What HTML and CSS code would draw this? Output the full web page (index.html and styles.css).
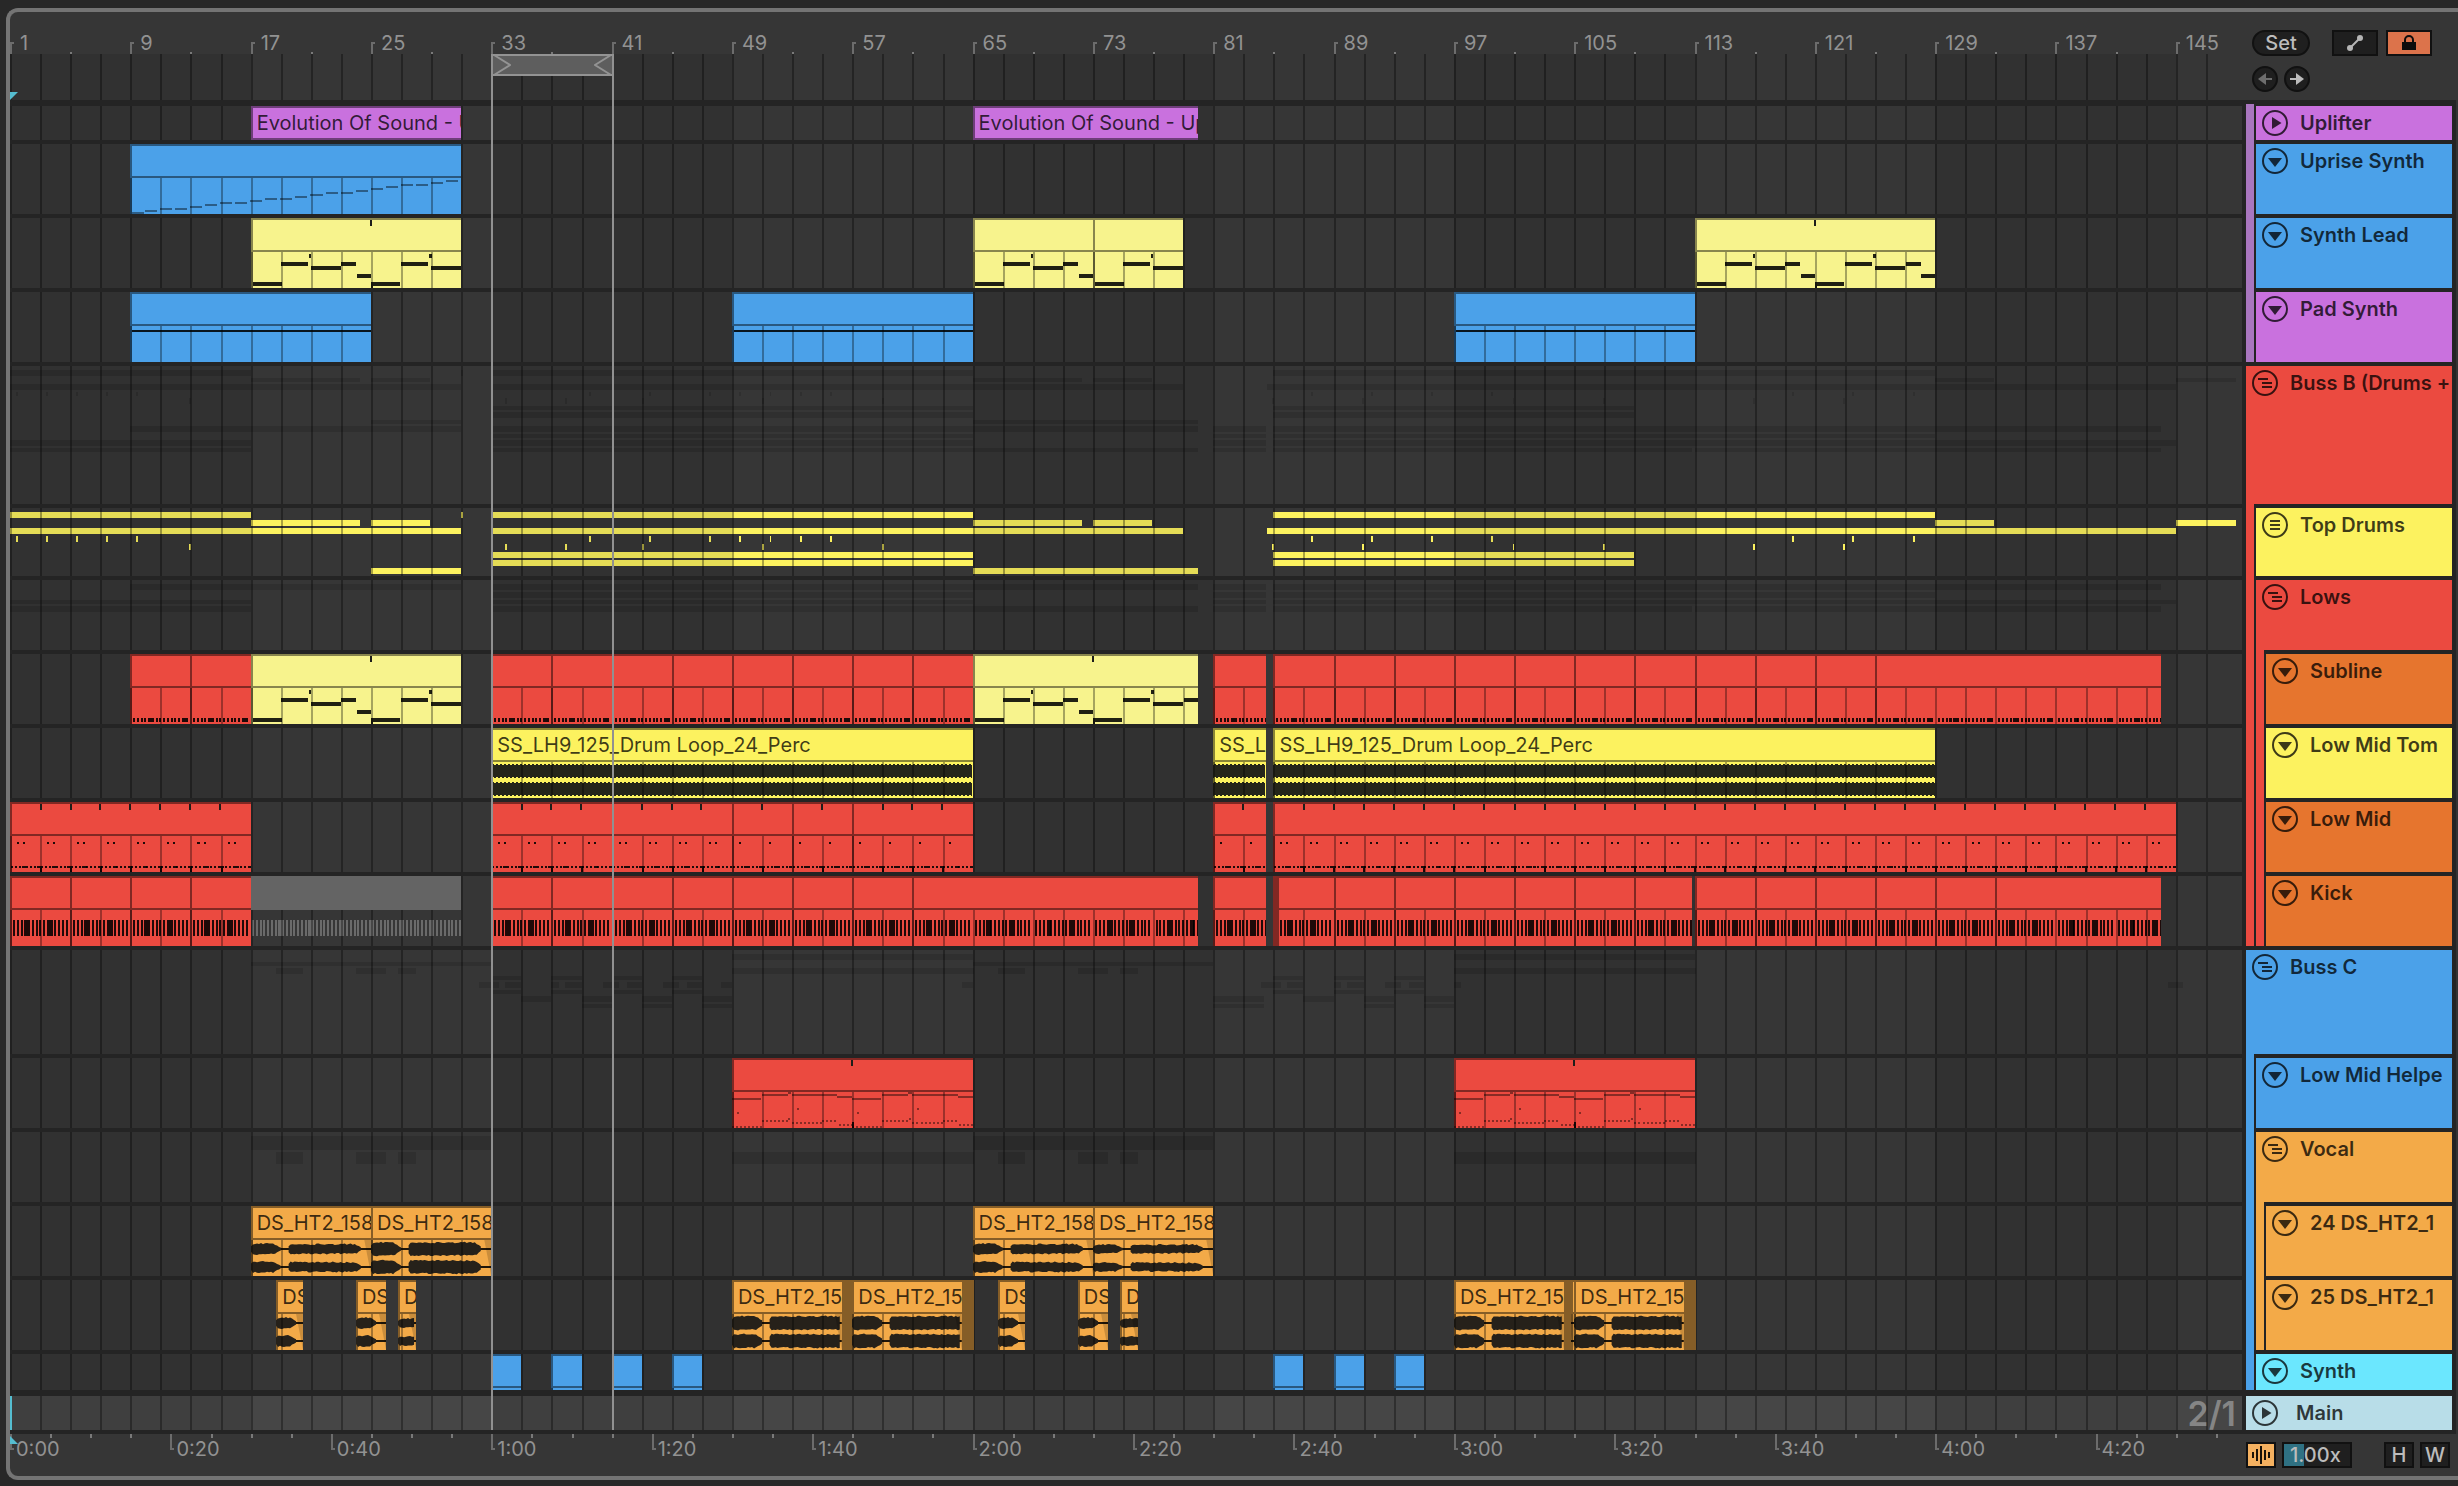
FILE: index.html
```html
<!DOCTYPE html>
<html lang="en">
<head>
    <meta charset="UTF-8">
    <meta name="viewport" content="width=device-width, initial-scale=1.0">
    <title>Arrangement</title>
    <link rel="stylesheet" href="styles.css">
</head>
<body>

    <!-- icons shared by the track headers -->
    <svg class="defs" aria-hidden="true">
        <symbol id="i-play" viewBox="0 0 26 26">
            <circle cx="13" cy="13" r="12" fill="none" stroke="currentColor" stroke-width="2"/>
            <path d="M10 7v12l9.500-6z" fill="currentColor"/>
        </symbol>
        <symbol id="i-fold" viewBox="0 0 26 26">
            <circle cx="13" cy="13" r="12" fill="none" stroke="currentColor" stroke-width="2"/>
            <path d="M6 10h14l-7 9z" fill="currentColor"/>
        </symbol>
        <symbol id="i-group" viewBox="0 0 26 26">
            <circle cx="13" cy="13" r="12" fill="none" stroke="currentColor" stroke-width="2"/>
            <path d="M6 9h10M10 13h10M10 17h10" stroke="currentColor" stroke-width="2"/>
        </symbol>
        <symbol id="i-list" viewBox="0 0 26 26">
            <circle cx="13" cy="13" r="12" fill="none" stroke="currentColor" stroke-width="2"/>
            <path d="M8 9h10M8 13h10M8 17h10" stroke="currentColor" stroke-width="2"/>
        </symbol>
    </svg>

    <div class="arranger">
        <div class="timeline">
            <div class="ruler" id="bars"></div>
            <div class="canvas" id="canvas">
                <div class="layer stripes" id="stripes"></div>
                <div class="layer lines" id="lines"></div>
                <div class="scrub"><span class="marker"></span></div>
                <div class="lanes" id="lanes"></div>
                <div class="layer loop" id="loop">
                    <div class="brace">
                        <svg width="18" height="22" viewBox="0 0 18 22"><path d="M1 1l16 10L1 21" fill="none" stroke="#939393" stroke-width="2"/></svg>
                        <svg width="18" height="22" viewBox="0 0 18 22"><path d="M17 1L1 11l16 10" fill="none" stroke="#939393" stroke-width="2"/></svg>
                    </div>
                </div>
            </div>
            <div class="ruler time" id="times"></div>
        </div>

        <div class="side">
            <div class="toolbar">
                <div class="tools">
                    <button class="btn pill">Set</button>
                    <button class="btn wide" aria-label="Automation">
                        <svg width="18" height="18" viewBox="0 0 18 18"><path d="M4 14L14 4" stroke="#b5b5b5" stroke-width="2"/><circle cx="4" cy="14" r="3" fill="#b5b5b5"/><circle cx="14" cy="4" r="3" fill="#b5b5b5"/></svg>
                    </button>
                    <button class="btn wide lock" aria-label="Lock envelopes">
                        <svg width="14" height="16" viewBox="0 0 14 16"><path d="M3 8V5a4 4 0 0 1 8 0v3" fill="none" stroke="#0d0d0d" stroke-width="2"/><path d="M0 7h14v8H0z" fill="#0d0d0d"/></svg>
                    </button>
                </div>
                <div class="tools">
                    <button class="btn round off" aria-label="Previous locator">
                        <svg width="14" height="12" viewBox="0 0 14 12"><path d="M0 6l8-6v12z" fill="currentColor"/><path d="M7 6h7" stroke="currentColor" stroke-width="2"/></svg>
                    </button>
                    <button class="btn round" aria-label="Next locator">
                        <svg width="14" height="12" viewBox="0 0 14 12"><path d="M14 6L6 0v12z" fill="currentColor"/><path d="M7 6H0" stroke="currentColor" stroke-width="2"/></svg>
                    </button>
                </div>
            </div>

            <div class="tracks">
                <div class="group mauve first">
                    <div class="children">
                        <div class="head purple short"><button class="fold" aria-label="Unfold"><svg><use href="#i-play"/></svg></button><span>Uplifter</span></div>
                        <div class="head blue"><button class="fold" aria-label="Fold"><svg><use href="#i-fold"/></svg></button><span>Uprise Synth</span></div>
                        <div class="head blue"><button class="fold" aria-label="Fold"><svg><use href="#i-fold"/></svg></button><span>Synth Lead</span></div>
                        <div class="head purple"><button class="fold" aria-label="Fold"><svg><use href="#i-fold"/></svg></button><span>Pad Synth</span></div>
                    </div>
                </div>
                <div class="group red">
                    <div class="head red buss-b"><button class="fold" aria-label="Fold"><svg><use href="#i-group"/></svg></button><span>Buss B (Drums +</span></div>
                    <div class="children">
                        <div class="head yellow drums"><button class="fold" aria-label="Fold"><svg><use href="#i-list"/></svg></button><span>Top Drums</span></div>
                        <div class="group red">
                            <div class="head red"><button class="fold" aria-label="Fold"><svg><use href="#i-group"/></svg></button><span>Lows</span></div>
                            <div class="children">
                                <div class="head rust"><button class="fold" aria-label="Fold"><svg><use href="#i-fold"/></svg></button><span>Subline</span></div>
                                <div class="head yellow"><button class="fold" aria-label="Fold"><svg><use href="#i-fold"/></svg></button><span>Low Mid Tom</span></div>
                                <div class="head rust"><button class="fold" aria-label="Fold"><svg><use href="#i-fold"/></svg></button><span>Low Mid</span></div>
                                <div class="head rust"><button class="fold" aria-label="Fold"><svg><use href="#i-fold"/></svg></button><span>Kick</span></div>
                            </div>
                        </div>
                    </div>
                </div>
                <div class="group blue">
                    <div class="head blue buss-c"><button class="fold" aria-label="Fold"><svg><use href="#i-group"/></svg></button><span>Buss C</span></div>
                    <div class="children">
                        <div class="head blue"><button class="fold" aria-label="Fold"><svg><use href="#i-fold"/></svg></button><span>Low Mid Helpe</span></div>
                        <div class="group amber">
                            <div class="head amber"><button class="fold" aria-label="Fold"><svg><use href="#i-group"/></svg></button><span>Vocal</span></div>
                            <div class="children">
                                <div class="head amber"><button class="fold" aria-label="Fold"><svg><use href="#i-fold"/></svg></button><span>24 DS_HT2_1</span></div>
                                <div class="head amber"><button class="fold" aria-label="Fold"><svg><use href="#i-fold"/></svg></button><span>25 DS_HT2_1</span></div>
                            </div>
                        </div>
                        <div class="head cyan synth"><button class="fold" aria-label="Fold"><svg><use href="#i-fold"/></svg></button><span>Synth</span></div>
                    </div>
                </div>
                <div class="head ice short main"><button class="fold" aria-label="Unfold"><svg><use href="#i-play"/></svg></button><span>Main</span></div>
            </div>

            <div class="footer">
                <button class="btn small wave" aria-label="Waveform zoom">
                    <svg width="18" height="18" viewBox="0 0 18 18"><path d="M1 6v6M5 3v12M9 0v18M13 4v10M17 6v6" stroke="#1a1208" stroke-width="2"/></svg>
                </button>
                <input class="zoom" type="text" value="1.00x" aria-label="Waveform zoom amount">
                <button class="btn small push">H</button>
                <button class="btn small">W</button>
            </div>
        </div>
    </div>

    <script src="script.js"></script>
</body>
</html>
```
FILE: styles.css
```css
* {
    box-sizing: border-box;
}
body {
    margin: 0;
    padding: 8px 0 6px 6px;
    background-color: #282828;
    font-family: Inter, "Liberation Sans", sans-serif;
    font-size: 20px;
    color: #929292;
}
.defs {
    display: none;
}
.arranger {
    display: grid;
    grid-template-columns: minmax(0, 1fr) 216px;
    border: 4px solid #747474;
    border-right: none;
    border-radius: 12px 0 0 12px;
    background-color: #363636;
}

/* colours */
.purple { --c: #c971de; }
.mauve { --c: #a976bf; }
.blue { --c: #4ba1e9; }
.red { --c: #eb4a40; }
.pale { --c: #f7f38d; }
.yellow { --c: #fcf25f; }
.rust { --c: #e6752e; }
.amber { --c: #f3aa48; }
.cyan { --c: #6be7fe; }
.ice { --c: #b8dde8; }

/* rulers */
.ruler {
    position: relative;
    height: 42px;
}
.ruler i {
    position: absolute;
    bottom: 0;
    width: 2px;
    height: 2px;
    background-color: #7a7a7a;
}
.ruler span {
    position: absolute;
    bottom: 0;
    height: 12px;
    padding-left: 8px;
    border-left: 2px solid #6c6c6c;
    line-height: 2px;
}
.ruler span::before {
    content: "";
    position: absolute;
    left: 0;
    top: 0;
    width: 2px;
    height: 2px;
    background-color: #6c6c6c;
}
.time i {
    bottom: auto;
    top: 0;
    height: 4px;
}
.time span {
    bottom: auto;
    top: 0;
    height: 16px;
    padding-left: 4px;
    line-height: 30px;
}
.time span::before {
    top: 14px;
}
.time .marker {
    top: 2px;
    bottom: auto;
    height: 8px;
    padding: 0;
    border: none;
    clip-path: polygon(0 0, 100% 100%, 0 100%);
}
.time .marker::before {
    display: none;
}

/* canvas: stripes < clip bodies < grid lines < clip titles < loop */
.canvas {
    position: relative;
}
.layer {
    position: absolute;
    top: 0;
    bottom: 0;
    left: 0;
    right: 0;
    overflow: hidden;
    pointer-events: none;
}
.stripes {
    z-index: 1;
}
.stripes div {
    position: absolute;
    top: 0;
    bottom: 0;
    background-color: rgba(0, 0, 0, 0.09);
}
.lines {
    z-index: 3;
}
.lines div {
    position: absolute;
    top: 0;
    bottom: 0;
    width: 2px;
    background-color: rgba(0, 0, 0, 0.33);
}
.scrub {
    position: relative;
    height: 52px;
}
.marker {
    position: absolute;
    left: 0;
    bottom: 6px;
    width: 8px;
    height: 8px;
    background-color: #55bdd0;
    clip-path: polygon(0 0, 100% 0, 0 100%);
    z-index: 4;
}
.scrub::after {
    content: "";
    position: absolute;
    left: 0;
    right: 0;
    bottom: 0;
    height: 6px;
    background-color: #242424;
    z-index: 4;
}
.lane {
    position: relative;
    height: 70px;
    margin-bottom: 4px;
}
.lane::after {
    content: "";
    position: absolute;
    left: 0;
    right: 0;
    top: 100%;
    height: 4px;
    background-color: #242424;
    z-index: 4;
}
.lane.short, .head.short { height: 34px; }
.lane.buss-b, .head.buss-b { height: 138px; }
.lane.drums, .head.drums { height: 68px; }
.lane.buss-c, .head.buss-c { height: 104px; }
.lane.synth, .head.synth { height: 36px; }
.lane.synth {
    margin-bottom: 6px;
}
.lane.synth::after {
    height: 6px;
}
.lane.main {
    display: flex;
    align-items: center;
    justify-content: flex-end;
    padding-right: 6px;
    background-color: #464646;
    font-size: 34px;
    font-weight: 600;
    color: #858585;
}
.lane.main::before {
    content: "";
    position: absolute;
    left: 0;
    top: 0;
    width: 2px;
    height: 100%;
    background-color: #55bdd0;
    z-index: 4;
}
.bar {
    position: absolute;
    background-color: #fcf25f;
}
.ghost .bar {
    background-color: rgba(0, 0, 0, 0.13);
}
.clip {
    position: absolute;
    top: 0;
    height: 100%;
    overflow: hidden;
}
.title {
    position: relative;
    z-index: 4;
    height: 34px;
    padding-left: 4px;
    border: 2px solid rgba(0, 0, 0, 0.45);
    border-right: none;
    background-color: var(--c);
    color: rgba(0, 0, 0, 0.77);
    line-height: 30px;
    white-space: nowrap;
    overflow: hidden;
}
.title i {
    position: absolute;
    top: 0;
    width: 2px;
    height: 6px;
    margin-left: -2px;
    background-color: #1e1e1a;
}
.body {
    position: relative;
    z-index: 2;
    height: 36px;
    background-color: var(--c);
    box-shadow: inset 2px 0 rgba(0, 0, 0, 0.45);
}
.body svg {
    display: block;
    width: 100%;
    height: 36px;
}
.muted .title {
    border: none;
    background-color: #646464;
}
.muted .body {
    background: none;
    box-shadow: none;
}
.shade {
    position: absolute;
    top: 0;
    height: 100%;
    z-index: 4;
    background-color: var(--c);
    box-shadow: inset 0 0 0 100px rgba(0, 0, 0, 0.45);
}
.loop {
    z-index: 5;
    border: 0 solid #919191;
    border-width: 0 2px;
}
.brace {
    display: flex;
    justify-content: space-between;
    height: 22px;
    border: 2px solid #939393;
    border-width: 2px 0;
    background-color: #5e5e5e;
}
.brace svg {
    margin-top: -2px;
}

/* right side */
.side {
    display: flex;
    flex-direction: column;
}
.toolbar {
    height: 88px;
    padding: 18px 0 0 10px;
}
.tools {
    display: flex;
    gap: 8px;
    margin-bottom: 10px;
}
.tools + .tools {
    gap: 6px;
}
.btn {
    display: flex;
    align-items: center;
    justify-content: center;
    height: 26px;
    padding: 0;
    border: 2px solid #111;
    background-color: #1f1f1f;
    color: #bcbcbc;
    font-family: inherit;
    font-size: 20px;
    font-weight: 500;
    cursor: pointer;
}
.pill {
    width: 58px;
    margin-right: 14px;
    border-radius: 13px;
}
.wide {
    width: 46px;
}
.lock {
    background-color: #dc734b;
}
.round {
    width: 26px;
    border-radius: 50%;
}
.round svg {
    flex: none;
}
.off {
    color: #6e6e6e;
}
.small {
    width: 30px;
}
.tracks {
    padding: 4px;
    border-right: 2px solid #333;
    background-color: #242424;
}
.group {
    margin-bottom: 4px;
    background-color: var(--c);
}
.children {
    margin-left: 8px;
    padding: 4px 0 0 2px;
    background-color: #242424;
}
.first > .children {
    padding-top: 2px;
}
.head {
    display: flex;
    align-items: flex-start;
    gap: 12px;
    height: 70px;
    margin-bottom: 4px;
    padding: 4px 0 0 6px;
    background-color: var(--c);
    color: rgba(0, 0, 0, 0.76);
    font-weight: 600;
    line-height: 26px;
    white-space: nowrap;
    overflow: hidden;
}
.group > .head,
.children > :last-child {
    margin-bottom: 0;
}
.head.main {
    gap: 18px;
    margin: 6px 0 0;
}
.fold {
    flex: none;
    width: 26px;
    height: 26px;
    padding: 0;
    border: none;
    background: none;
    color: inherit;
    cursor: pointer;
}
.fold svg {
    display: block;
    width: 26px;
    height: 26px;
}
.footer {
    display: flex;
    gap: 6px;
    padding: 8px 8px 0 4px;
}
.wave {
    background-color: #f5b160;
}
.zoom {
    width: 70px;
    height: 26px;
    padding: 0 0 0 6px;
    border: 2px solid #111;
    background: linear-gradient(to right, #2f7183 20px, #1f1f1f 20px);
    color: #bcbcbc;
    font: 500 20px Inter, sans-serif;
}
.push {
    margin-left: auto;
}
```
FILE: script.js
```js
// number of bars that fit in the visible timeline
const TOTAL = 148.4;
const BAR = 15; // svg units per bar

const pos = (bar) => ((bar - 1) / TOTAL * 100) + "%";
const len = (bars) => (bars / TOTAL * 100) + "%";

function add(parent, tag, className, left, width) {
    const el = document.createElement(tag);
    if (className) el.className = className;
    if (left !== undefined) el.style.left = left;
    if (width !== undefined) el.style.width = width;
    parent.appendChild(el);
    return el;
}

// --- clip contents -------------------------------------------------

function rect(x, y, w, h, fill) {
    return `<rect x="${x.toFixed(1)}" y="${y}" width="${w.toFixed(1)}" height="${h}" fill="${fill}"/>`;
}

const INK = "rgba(0,0,0,.87)";
const DIM = "rgba(0,0,0,.42)";

const draw = {
    rise(n) {
        const ys = [34, 32, 30, 30, 28, 26, 24, 24, 22, 20, 20, 18, 16, 14, 14, 12, 10, 8, 6, 6, 4, 2];
        return ys.map((y, i) => rect(i * BAR + (i ? 0 : 2), y, 12, 2, DIM)).join("");
    },
    lead(n) {
        const notes = [[0, 1.9, 30], [2, 1.8, 10], [3.85, 0.15, 2], [4, 1.95, 14], [6, 1, 10], [7.05, 0.95, 22]];
        let s = "";
        for (let b = 0; b < n; b += 8) {
            notes.forEach(([x, w, y]) => { s += rect((b + x) * BAR + (b + x ? 0 : 2), y, w * BAR, 4, INK); });
            if (b) s += rect(b * BAR, 34, 2, 2, INK);
        }
        return s;
    },
    pad(n) {
        return rect(2, 4, n * BAR, 2, INK);
    },
    sub(n) {
        let s = "";
        for (let i = 0; i < n * 4; i++) {
            const k = i % 16;
            if (k === 15) continue;
            s += rect(i * 3.75 + 3, 30, k === 4 || k === 13 ? 4 : 2, 4, INK);
        }
        return s;
    },
    kick(n) {
        let s = "";
        for (let i = 0; i < n * 4; i++) {
            const k = i % 16;
            if (k === 15) continue;
            s += rect(i * 3.75 + 3, 10, k === 3 || k === 9 ? 4 : 2, 16, INK);
        }
        return s;
    },
    mutedKick(n) {
        let s = "";
        for (let i = 0; i < n * 4; i++) {
            s += rect(i * 3.75 + 1, 10, i % 8 === 7 ? 4 : 2, 16, "#6a6a6a");
        }
        return s;
    },
    lowmid(n, single) {
        let s = "";
        for (let b = 0; b < n; b += 2) {
            s += rect(b * BAR + 7, 6, 2, 2, INK);
            if (!single) s += rect(b * BAR + 13, 6, 2, 2, INK);
        }
        for (let i = 0; i < n * 4; i++) s += rect(i * 3.75 + 1, 30, i % 4 === 3 ? 4 : 2, 2, INK);
        return s;
    },
    lowmid1(n) {
        return draw.lowmid(n, true);
    },
    helper(n) {
        const lines = [[0, 1.9, 6], [2, 1.7, 2], [3.7, 0.25, 0], [4, 3, 2], [7, 1, 4], [0.3, 0.13, 20], [4.3, 0.13, 16]];
        const dots = [[0, 2, 34], [2, 3.7, 28], [3.75, 4, 26], [4, 6, 30], [6, 7, 28], [7.1, 8, 32]];
        let s = "";
        for (let b = 0; b < n; b += 8) {
            lines.forEach(([x, w, y]) => { s += rect((b + x) * BAR, y, w * BAR, 2, DIM); });
            dots.forEach(([from, to, y]) => {
                for (let x = from * BAR; x < to * BAR - 1; x += 4) s += rect(b * BAR + x, y, 2, 2, DIM);
            });
            if (b) s += rect(b * BAR, 30, 2, 6, INK);
        }
        return s;
    },
    synth(n) {
        return "";
    }
};

// repeatable noise for the waveforms
function noise(i) {
    const v = Math.sin(i * 12.9898) * 43758.5453;
    return v - Math.floor(v);
}

// shape: list of [from, to, amplitude] in bars, silence in between
function waveform(n, shape) {
    let s = "";
    [9, 27].forEach((cy, ch) => {
        s += rect(0, cy - 1, n * BAR, 2, INK);
        shape.forEach(([from, to, amp]) => {
            const a = from * BAR, b = Math.min(to, n) * BAR;
            let top = "", bottom = "";
            for (let x = a; x <= b; x += 2) {
                const edge = to > n ? (x - a) / 4 + 0.6 : Math.min((x - a) / 4 + 0.6, (b - x) / 9 + 0.2);
                const k = Math.min(1, edge);
                top += `L${x} ${(cy - k * (amp - 0.5 + noise(x + ch) * 1.5)).toFixed(1)}`;
                bottom = `L${x} ${(cy + k * (amp - 0.5 + noise(x + 7 + ch) * 1.5)).toFixed(1)}` + bottom;
            }
            s += `<path d="M${a} ${cy}${top}${bottom}L${a} ${cy}Z" fill="#26211a"/>`;
        });
    });
    const w = n * BAR;
    s += `<path d="M${w} 0v36L${w - 7} 0z" fill="rgba(0,0,0,.17)"/>`;
    return s;
}

function percLoop(n) {
    let s = "";
    [9, 27].forEach((cy) => {
        let top = "", bottom = "";
        for (let x = 0; x <= n * BAR; x += 2) {
            const t = (x / 2) % 2;
            top += `L${x} ${cy - (t ? 7 : 6)}`;
            bottom = `L${x} ${cy + (t ? 6 : 7)}` + bottom;
        }
        s += `<path d="M0 ${cy}${top}${bottom}Z" fill="#25251a"/>`;
    });
    return s;
}

// --- track data, positions in bars ----------------------------------

function run(from, to, step, color, kind) {
    const out = [];
    for (let b = from; b < to; b += step) out.push({ s: b, e: Math.min(b + step, to), c: color, k: kind });
    return out;
}

function every(from, to, step) {
    const out = [];
    for (let b = from; b <= to; b += step) out.push(b);
    return out;
}

const DS = "DS_HT2_158";
const SS = "SS_LH9_125_Drum Loop_24_Perc";
const EV = "Evolution Of Sound - Uplifter";

const soft = [[0, 2, 5], [2.5, 7.4, 4.5]];
const loud = [[0, 2, 6.2], [2.5, 7.4, 6.2]];
const full = [[0, 2.1, 6.4], [2.5, 9, 6.4]];
const word = [[0, 1.4, 5]];

const uplifter = [{ s: 17, e: 31, c: "purple", t: EV }, { s: 65, e: 80, c: "purple", t: EV }];
const subline = [
    ...run(9, 17, 4, "red", "sub"),
    { s: 17, e: 31, c: "pale", k: "lead", ticks: [25] },
    ...run(33, 65, 4, "red", "sub"),
    { s: 65, e: 80, c: "pale", k: "lead", ticks: [73] },
    { s: 81, e: 84.5, c: "red", k: "sub" },
    ...run(85, 125, 4, "red", "sub"),
    { s: 125, e: 144, c: "red", k: "sub" }
];
const tom = [
    { s: 33, e: 65, c: "yellow", k: "perc", t: SS },
    { s: 81, e: 84.5, c: "yellow", k: "perc", t: SS },
    { s: 85, e: 129, c: "yellow", k: "perc", t: SS }
];
const lowmid = [
    { s: 1, e: 17, c: "red", k: "lowmid", ticks: every(3, 15, 2) },
    { s: 33, e: 41, c: "red", k: "lowmid", ticks: [35, 37, 39] },
    { s: 41, e: 49, c: "red", k: "lowmid", ticks: [43, 45, 47] },
    { s: 49, e: 53, c: "red", k: "lowmid1", ticks: [51] },
    { s: 53, e: 57, c: "red", k: "lowmid1", ticks: [55] },
    { s: 57, e: 65, c: "red", k: "lowmid1", ticks: [59, 61, 63] },
    { s: 81, e: 84.5, c: "red", k: "lowmid1", ticks: [83] },
    { s: 85, e: 145, c: "red", k: "lowmid", ticks: every(87, 143, 2) }
];
const kick = [
    ...run(1, 17, 4, "red", "kick"),
    { s: 17, e: 31, c: "muted", k: "mutedKick" },
    ...run(33, 61, 4, "red", "kick"),
    { s: 61, e: 80, c: "red", k: "kick" },
    { s: 81, e: 84.5, c: "red", k: "kick" },
    ...run(85, 112.85, 4, "red", "kick"),
    ...run(113, 133, 4, "red", "kick"),
    { s: 133, e: 144, c: "red", k: "kick" },
    { s: 85, e: 85.4, c: "red", shade: true }
];
const helper = [
    { s: 49, e: 65, c: "red", k: "helper", ticks: [57] },
    { s: 97, e: 113, c: "red", k: "helper", ticks: [105] }
];
const vocal24 = [
    { s: 17, e: 25, c: "amber", t: DS, wave: soft },
    { s: 25, e: 33, c: "amber", t: DS, wave: loud },
    { s: 65, e: 73, c: "amber", t: DS, wave: soft },
    { s: 73, e: 81, c: "amber", t: DS, wave: [[0, 2, 4], [2.5, 7.4, 4]] }
];
const vocal25 = [
    { s: 18.7, e: 20.5, c: "amber", t: DS, wave: word },
    { s: 24, e: 26, c: "amber", t: DS, wave: word },
    { s: 26.8, e: 28, c: "amber", t: DS, wave: [[0, 2, 4]] },
    { s: 49, e: 56.3, c: "amber", t: DS, wave: full },
    { s: 56.3, e: 57, c: "amber", shade: true },
    { s: 57, e: 64.3, c: "amber", t: DS, wave: full },
    { s: 64.3, e: 65.1, c: "amber", shade: true },
    { s: 66.7, e: 68.5, c: "amber", t: DS, wave: word },
    { s: 72, e: 74, c: "amber", t: DS, wave: word },
    { s: 74.8, e: 76, c: "amber", t: DS, wave: [[0, 2, 4]] },
    { s: 97, e: 104.3, c: "amber", t: DS, wave: full },
    { s: 104.3, e: 104.8, c: "amber", shade: true },
    { s: 104.8, e: 105, c: "amber", wave: [] },
    { s: 105, e: 112.3, c: "amber", t: DS, wave: full },
    { s: 112.3, e: 113.1, c: "amber", shade: true }
];
const synth = [33, 37, 41, 45, 85, 89, 93].map((b) => ({ s: b, e: b + 2, c: "blue", k: "synth" }));

const hit = (b) => [b, b + 0.13];
const topDrums = [
    [[1, 17], [31, 31.1], [33, 65], [85, 129]],
    [[17, 24.3], [25, 28.9], [65, 72.3], [73, 76.9], [129, 132.9], [145, 149]],
    [[1, 31], [33, 79], [84.6, 145]],
    [1.4, 3.4, 5.4, 7.4, 9.4, 39.5, 43.5, 47.5, 49.5, 51.5, 53.5, 55.5, 87.5, 91.5, 95.5, 99.5, 119.5, 123.5, 127.5].map(hit),
    [12.9, 33.9, 37.9, 43, 51, 59, 84.9, 90.9, 100.9, 106.9, 116.9, 122.9].map(hit),
    [[33, 65], [85, 109]],
    [[33, 65], [85, 109]],
    [[25, 31], [65, 80]]
];
const spans = (clips) => clips.filter((c) => c.c !== "muted").map((c) => [c.s, c.e]);
const lowRows = [subline, tom, lowmid, kick.filter((c) => !c.shade)].map(spans);
const both = (list) => [...list.map(([a, b]) => [a - 52, b - 52]), ...list];
const synthRows = [
    [...both([[85, 87], [89, 91], [93, 95]]), [45, 47]],
    [...both([[84.2, 85.5], [85.9, 87], [89, 89.5], [89.9, 91], [92.4, 93.5], [94, 95]]), [44.4, 45.5], [46, 47], [48.3, 49], [64.3, 65], [97, 97.5], [144.5, 145.5]],
    [...both([[85, 87], [89, 91], [93, 95]]), [45, 47]],
    [...both([[87, 89], [91, 93], [95, 97]]), [47, 49], [81, 84.4]],
    [...both([[91, 93], [95, 97]]), [47, 49], [81, 84.4]]
];

const TIGHT = [[4, 6], [12, 4], [18, 6], [26, 4], [32, 6], [40, 4], [46, 6], [54, 4], [60, 6], [68, 4], [74, 6], [82, 4]];

const tracks = [
    { cls: "short", clips: uplifter },
    { clips: [{ s: 9, e: 31, c: "blue", k: "rise" }] },
    { clips: [
        { s: 17, e: 31, c: "pale", k: "lead", ticks: [25] },
        { s: 65, e: 73, c: "pale", k: "lead" },
        { s: 73, e: 79, c: "pale", k: "lead" },
        { s: 113, e: 129, c: "pale", k: "lead", ticks: [121] }
    ] },
    { clips: [[9, 25], [49, 65], [97, 113]].map(([s, e]) => ({ s, e, c: "blue", k: "pad" })) },
    { cls: "buss-b ghost", rows: [...topDrums, ...lowRows], ys: TIGHT },
    { cls: "drums", rows: topDrums, ys: topDrums.map((r, i) => [4 + i * 8, 6]) },
    { cls: "ghost", rows: lowRows, ys: [[4, 6], [12, 6], [20, 4], [26, 6]] },
    { clips: subline },
    { clips: tom },
    { clips: lowmid },
    { clips: kick },
    { cls: "buss-c ghost", rows: [spans(helper), spans(vocal24), spans(vocal25), ...synthRows], ys: TIGHT },
    { clips: helper },
    { cls: "ghost", rows: [spans(vocal24), spans(vocal25)], ys: [[4, 14], [20, 12]] },
    { clips: vocal24 },
    { clips: vocal25 },
    { cls: "synth", clips: synth },
    { cls: "short main", text: "2/1" }
];

// --- build ----------------------------------------------------------

function addClip(lane, clip) {
    const n = clip.e - clip.s;
    if (clip.shade) {
        add(lane, "div", "shade " + clip.c, pos(clip.s), len(n));
        return;
    }
    const el = add(lane, "div", "clip " + clip.c, pos(clip.s), len(n));
    const title = add(el, "div", "title");
    title.textContent = clip.t || "";
    (clip.ticks || []).forEach((b) => add(title, "i", "", ((b - clip.s) / n * 100) + "%"));

    let inner = "";
    if (clip.wave) inner = waveform(n, clip.wave);
    else if (clip.k === "perc") inner = percLoop(n);
    else if (clip.k) inner = draw[clip.k](n);
    if (clip.k && clip.k.startsWith("lowmid")) {
        (clip.ticks || []).forEach((b) => { inner += rect((b - clip.s) * BAR, 32, 2, 4, INK); });
    }
    const crisp = clip.wave ? "auto" : "crispEdges";
    add(el, "div", "body").innerHTML =
        `<svg viewBox="0 0 ${n * BAR} 36" preserveAspectRatio="none" shape-rendering="${crisp}">${inner}</svg>`;
}

const lanes = document.getElementById("lanes");
tracks.forEach((track) => {
    const lane = add(lanes, "div", "lane " + (track.cls || ""));
    (track.clips || []).forEach((clip) => addClip(lane, clip));
    (track.rows || []).forEach((row, i) => {
        row.forEach(([s, e]) => {
            const bar = add(lane, "div", "bar", pos(s), len(e - s));
            bar.style.top = track.ys[i][0] + "px";
            bar.style.height = track.ys[i][1] + "px";
        });
    });
    if (track.text) lane.append(track.text);
});

const stripes = document.getElementById("stripes");
for (let b = 1; b < 149; b += 32) add(stripes, "div", "", pos(b), len(16));

const lines = document.getElementById("lines");
for (let b = 1; b < 149; b += 2) add(lines, "div", "", pos(b));

const bars = document.getElementById("bars");
for (let b = 1; b < 149; b += 4) {
    if (b % 8 === 1) add(bars, "span", "", pos(b)).textContent = b;
    else add(bars, "i", "", pos(b));
}

// 128 bpm: one second is 8/15 of a bar
const times = document.getElementById("times");
for (let t = 0; t < 278; t += 5) {
    const left = pos(1 + t * 8 / 15);
    if (t % 20 === 0) add(times, "span", "", left).textContent = Math.floor(t / 60) + ":" + String(t % 60).padStart(2, "0");
    else add(times, "i", "", left);
}
add(times, "span", "marker");

const loop = document.getElementById("loop");
loop.style.left = pos(33);
loop.style.width = `calc(${len(8)} + 2px)`;
```
